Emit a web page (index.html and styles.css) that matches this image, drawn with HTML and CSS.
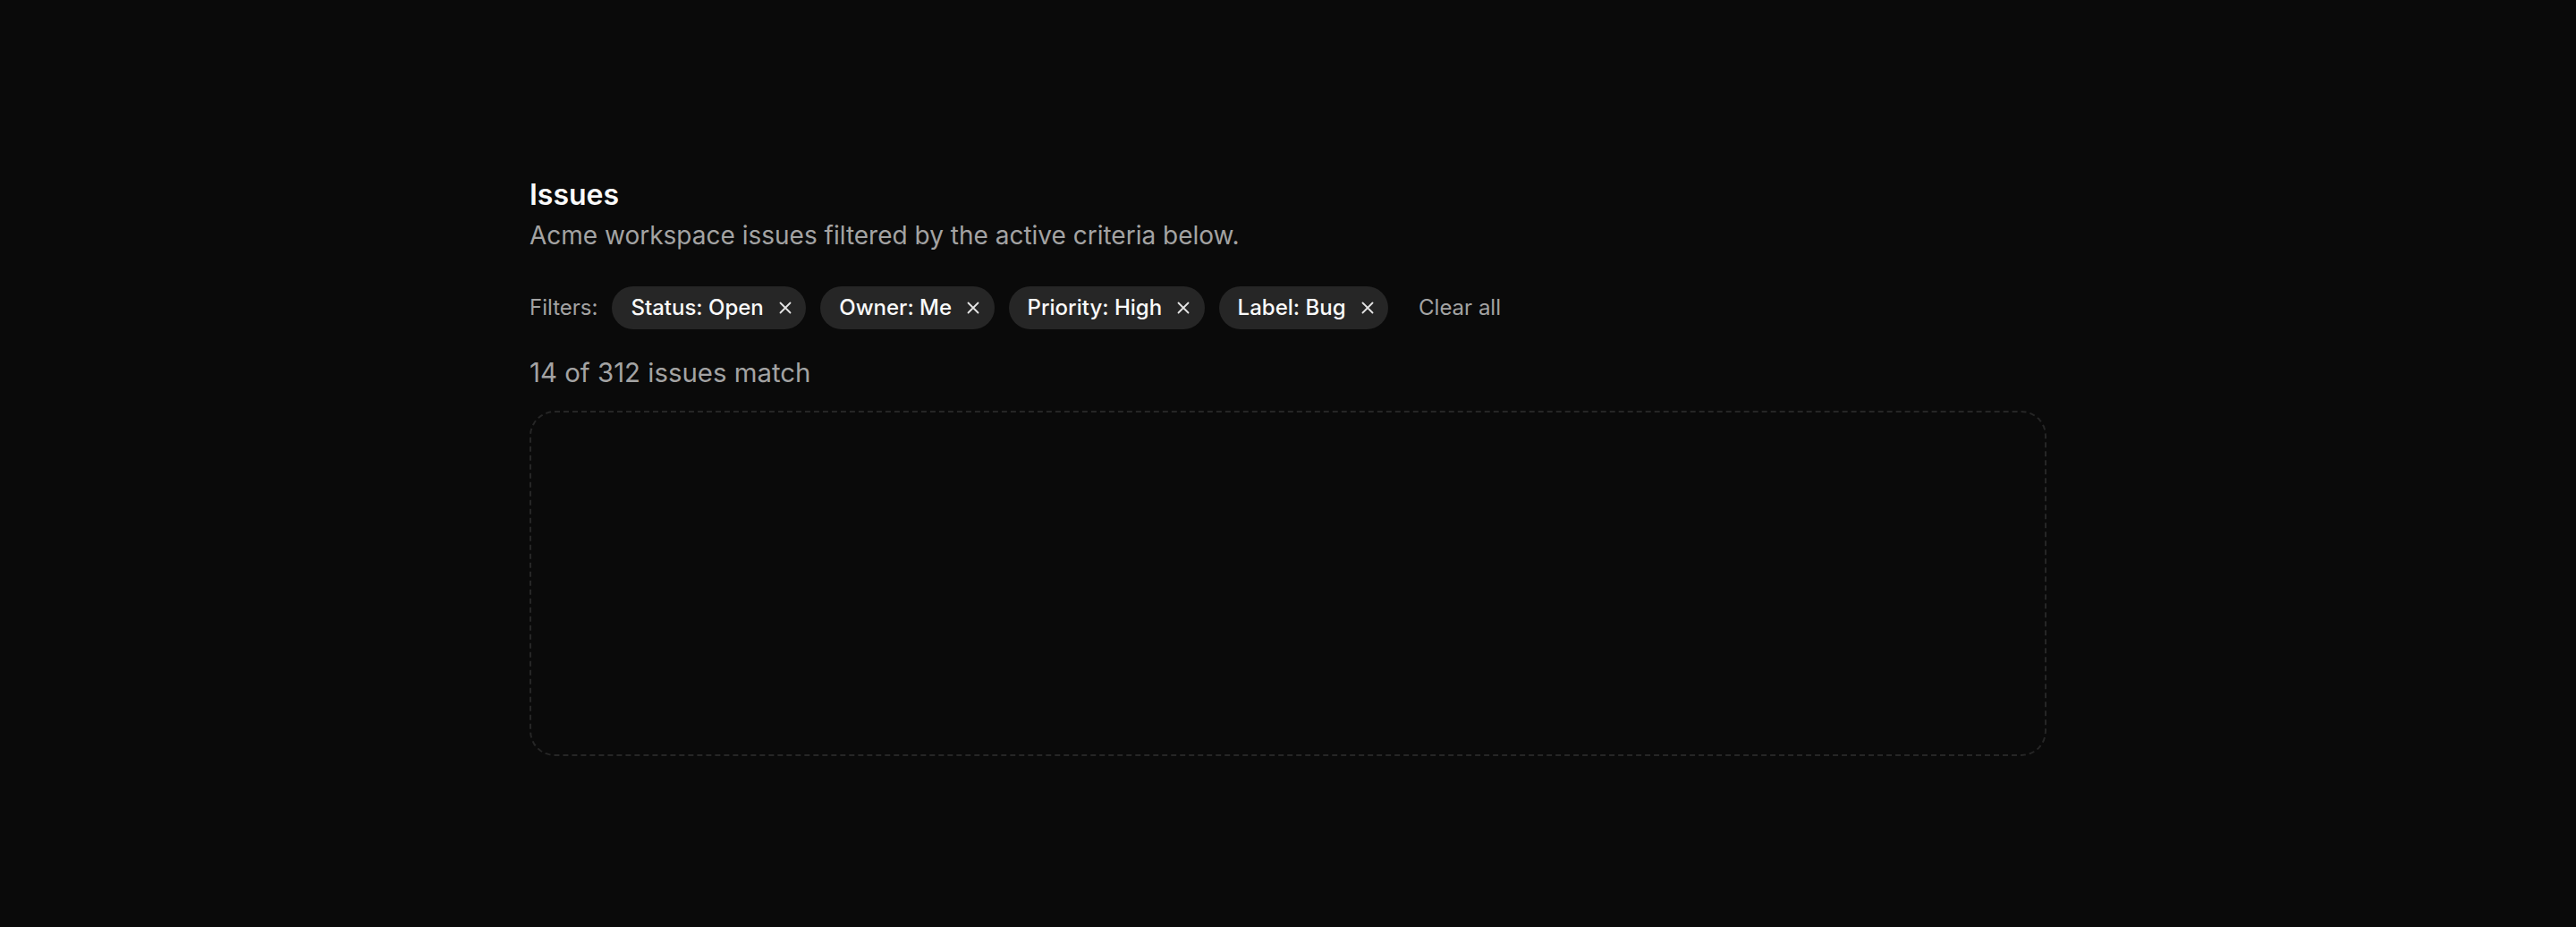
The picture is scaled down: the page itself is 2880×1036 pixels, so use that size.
FILE: index.html
```html
<!DOCTYPE html>
<html lang="en">
<head>
<meta charset="utf-8">
<title>Issues</title>
<link rel="stylesheet" href="styles.css">
</head>
<body>
<main class="page">
  <h1 class="title">Issues</h1>
  <p class="subtitle">Acme workspace issues filtered by the active criteria below.</p>
  <div class="filters">
    <span class="filters-label">Filters:</span>
    <span class="chip">Status: Open<button class="chip-x" aria-label="Remove"><svg viewBox="0 0 14 14"><path d="M1.5 1.5l11 11M12.5 1.5l-11 11" stroke="currentColor" stroke-width="1.8" stroke-linecap="round" fill="none"/></svg></button></span>
    <span class="chip">Owner: Me<button class="chip-x" aria-label="Remove"><svg viewBox="0 0 14 14"><path d="M1.5 1.5l11 11M12.5 1.5l-11 11" stroke="currentColor" stroke-width="1.8" stroke-linecap="round" fill="none"/></svg></button></span>
    <span class="chip">Priority: High<button class="chip-x" aria-label="Remove"><svg viewBox="0 0 14 14"><path d="M1.5 1.5l11 11M12.5 1.5l-11 11" stroke="currentColor" stroke-width="1.8" stroke-linecap="round" fill="none"/></svg></button></span>
    <span class="chip">Label: Bug<button class="chip-x" aria-label="Remove"><svg viewBox="0 0 14 14"><path d="M1.5 1.5l11 11M12.5 1.5l-11 11" stroke="currentColor" stroke-width="1.8" stroke-linecap="round" fill="none"/></svg></button></span>
    <button class="clear">Clear all</button>
  </div>
  <p class="count">14 of 312 issues match</p>
  <div class="results"></div>
</main>
</body>
</html>
```

FILE: styles.css
```css
html, body {
  margin: 0;
  padding: 0;
  background: #0a0a0a;
  color: #fafafa;
  font-family: Inter, "Noto Sans", sans-serif;
}

.page {
  width: 1696px;
  margin: 0 auto;
  padding-top: 198px;
}

.title {
  margin: 0;
  font-size: 32px;
  line-height: 40px;
  font-weight: 600;
  color: #fafafa;
}

.subtitle {
  margin: 5px 0 0;
  font-size: 28px;
  line-height: 40px;
  color: #a3a3a3;
}

.filters {
  margin-top: 37px;
  display: flex;
  align-items: center;
  gap: 16px;
}

.filters-label {
  font-size: 24px;
  line-height: 32px;
  color: #a3a3a3;
}

.chip {
  display: inline-flex;
  align-items: center;
  gap: 17px;
  height: 48px;
  box-sizing: border-box;
  padding: 0 16.5px 0 21px;
  border-radius: 24px;
  background: #262626;
  font-size: 24px;
  line-height: 32px;
  font-weight: 500;
  color: #fafafa;
}

.chip-x {
  display: inline-flex;
  align-items: center;
  justify-content: center;
  width: 14px;
  height: 14px;
  padding: 0;
  border: 0;
  background: none;
  color: #e5e5e5;
}

.chip-x svg {
  width: 14px;
  height: 14px;
  display: block;
}

.clear {
  margin-left: 18px;
  padding: 0;
  border: 0;
  background: none;
  font-family: inherit;
  font-size: 24px;
  line-height: 32px;
  color: #a3a3a3;
}

.count {
  margin: 29px 0 0;
  font-size: 29.4px;
  line-height: 40px;
  color: #a3a3a3;
}

.results {
  margin-top: 22px;
  height: 386px;
  box-sizing: border-box;
  border: 2px dashed #262626;
  border-radius: 28px;
}
```
